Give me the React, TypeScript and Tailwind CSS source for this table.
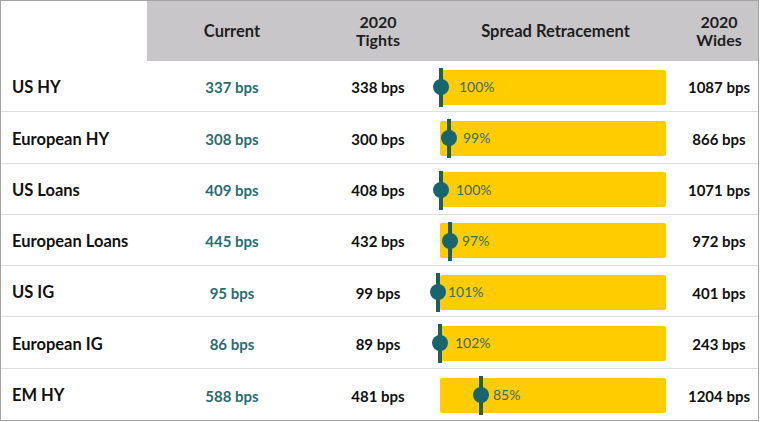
import React from "react";

type Row = {
  label: string;
  current: string;
  tights: string;
  pct: string;
  marker: number;
  text: number;
  wides: string;
};

const rows: Row[] = [
  { label: "US HY", current: "337 bps", tights: "338 bps", pct: "100%", marker: 2, text: 20, wides: "1087 bps" },
  { label: "European HY", current: "308 bps", tights: "300 bps", pct: "99%", marker: 10, text: 24, wides: "866 bps" },
  { label: "US Loans", current: "409 bps", tights: "408 bps", pct: "100%", marker: 2, text: 17, wides: "1071 bps" },
  { label: "European Loans", current: "445 bps", tights: "432 bps", pct: "97%", marker: 11, text: 23, wides: "972 bps" },
  { label: "US IG", current: "95 bps", tights: "99 bps", pct: "101%", marker: -1, text: 9, wides: "401 bps" },
  { label: "European IG", current: "86 bps", tights: "89 bps", pct: "102%", marker: 1, text: 16, wides: "243 bps" },
  { label: "EM HY", current: "588 bps", tights: "481 bps", pct: "85%", marker: 42, text: 54, wides: "1204 bps" },
];

export default function App() {
  return (
    <div
      className="w-[760px] h-[422px] bg-white"
      style={{ fontFamily: "Lato, 'Open Sans', sans-serif" }}
    >
      <div className="w-[759px] h-[421px] border border-[#a3a3a3] grid grid-cols-[146px_170px_122px_241px_1fr] grid-rows-[60px_repeat(7,1fr)]">
        <div className="bg-white" />
        <div className="bg-[#c8c6c9] flex items-center justify-center text-[16.5px] font-bold text-[#1e1e1e]">
          Current
        </div>
        <div className="bg-[#c8c6c9] flex flex-col items-center justify-center text-[16px] font-bold text-[#1e1e1e] leading-[18px]">
          <span>2020</span>
          <span>Tights</span>
        </div>
        <div className="bg-[#c8c6c9] flex items-center justify-center pr-[8px] text-[16.5px] font-bold text-[#1e1e1e]">
          Spread Retracement
        </div>
        <div className="bg-[#c8c6c9] flex flex-col items-center justify-center text-[16px] font-bold text-[#1e1e1e] leading-[18px]">
          <span>2020</span>
          <span>Wides</span>
        </div>
        {rows.map((r, i) => {
          const sep = i < rows.length - 1 ? "border-b border-[#dedede]" : "";
          return (
            <React.Fragment key={r.label}>
              <div className={`flex items-center pl-[11px] pt-[3px] text-[16.5px] font-bold text-[#111] ${sep}`}>
                {r.label}
              </div>
              <div className={`flex items-center justify-center pt-[3px] text-[15px] font-bold text-[#2a6d70] ${sep}`}>
                {r.current}
              </div>
              <div className={`flex items-center justify-center pt-[3px] text-[15px] font-bold text-[#111] ${sep}`}>
                {r.tights}
              </div>
              <div className={`relative flex items-center ${sep}`}>
                <div className="ml-[1px] mt-[2px] w-[226px] h-[35px] bg-[#ffcc00] rounded-[2px]" />
                <div
                  className="absolute top-[7px] w-[4px] h-[39px] bg-[#1c5f5f]"
                  style={{ left: r.marker - 2 }}
                />
                <div
                  className="absolute top-[18px] w-[16px] h-[16px] rounded-full bg-[#17666f]"
                  style={{ left: r.marker - 8 }}
                />
                <span
                  className="absolute top-[17px] text-[14px] leading-[18px] text-[#3d6c62]"
                  style={{ left: r.text }}
                >
                  {r.pct}
                </span>
              </div>
              <div className={`flex items-center justify-center pt-[3px] text-[15px] font-bold text-[#111] ${sep}`}>
                {r.wides}
              </div>
            </React.Fragment>
          );
        })}
      </div>
    </div>
  );
}
